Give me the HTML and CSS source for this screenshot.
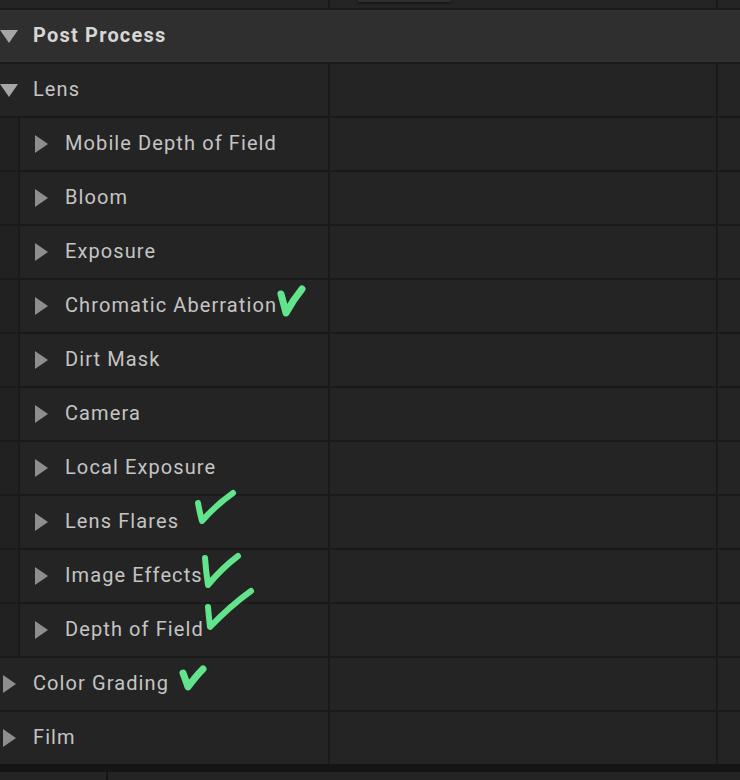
FILE: index.html
```html
<!DOCTYPE html>
<html>
<head>
<meta charset="utf-8">
<link rel="stylesheet" href="styles.css">
</head>
<body>
<div class="panel">
  <div class="rows">
    <div class="row top">
      <div class="cell"></div>
      <div class="cell value"><div class="tab"></div></div>
      <div class="cell"></div>
    </div>
    <div class="row header">
      <div class="cell name">
        <span class="icon"><svg width="18" height="13" viewBox="0 0 18 13"><polygon points="0,0 18,0 9,13" fill="#a6a6a6"/></svg></span>
        <span class="label bold">Post Process</span>
      </div>
    </div>
    <div class="row">
      <div class="cell name">
        <span class="icon"><svg width="18" height="13" viewBox="0 0 18 13"><polygon points="0,0 18,0 9,13" fill="#a6a6a6"/></svg></span>
        <span class="label">Lens</span>
      </div>
      <div class="cell"></div>
      <div class="cell"></div>
    </div>
    <div class="row nested">
      <div class="cell indent"></div>
      <div class="cell name"><span class="icon"><svg width="13" height="18" viewBox="0 0 13 18"><polygon points="0,0 13,9 0,18" fill="#8e8e8e"/></svg></span><span class="label">Mobile Depth of Field</span></div>
      <div class="cell"></div>
      <div class="cell"></div>
    </div>
    <div class="row nested">
      <div class="cell indent"></div>
      <div class="cell name"><span class="icon"><svg width="13" height="18" viewBox="0 0 13 18"><polygon points="0,0 13,9 0,18" fill="#8e8e8e"/></svg></span><span class="label">Bloom</span></div>
      <div class="cell"></div>
      <div class="cell"></div>
    </div>
    <div class="row nested">
      <div class="cell indent"></div>
      <div class="cell name"><span class="icon"><svg width="13" height="18" viewBox="0 0 13 18"><polygon points="0,0 13,9 0,18" fill="#8e8e8e"/></svg></span><span class="label">Exposure</span></div>
      <div class="cell"></div>
      <div class="cell"></div>
    </div>
    <div class="row nested">
      <div class="cell indent"></div>
      <div class="cell name"><span class="icon"><svg width="13" height="18" viewBox="0 0 13 18"><polygon points="0,0 13,9 0,18" fill="#8e8e8e"/></svg></span><span class="label">Chromatic Aberration</span></div>
      <div class="cell"></div>
      <div class="cell"></div>
    </div>
    <div class="row nested">
      <div class="cell indent"></div>
      <div class="cell name"><span class="icon"><svg width="13" height="18" viewBox="0 0 13 18"><polygon points="0,0 13,9 0,18" fill="#8e8e8e"/></svg></span><span class="label">Dirt Mask</span></div>
      <div class="cell"></div>
      <div class="cell"></div>
    </div>
    <div class="row nested">
      <div class="cell indent"></div>
      <div class="cell name"><span class="icon"><svg width="13" height="18" viewBox="0 0 13 18"><polygon points="0,0 13,9 0,18" fill="#8e8e8e"/></svg></span><span class="label">Camera</span></div>
      <div class="cell"></div>
      <div class="cell"></div>
    </div>
    <div class="row nested">
      <div class="cell indent"></div>
      <div class="cell name"><span class="icon"><svg width="13" height="18" viewBox="0 0 13 18"><polygon points="0,0 13,9 0,18" fill="#8e8e8e"/></svg></span><span class="label">Local Exposure</span></div>
      <div class="cell"></div>
      <div class="cell"></div>
    </div>
    <div class="row nested">
      <div class="cell indent"></div>
      <div class="cell name"><span class="icon"><svg width="13" height="18" viewBox="0 0 13 18"><polygon points="0,0 13,9 0,18" fill="#8e8e8e"/></svg></span><span class="label">Lens Flares</span></div>
      <div class="cell"></div>
      <div class="cell"></div>
    </div>
    <div class="row nested">
      <div class="cell indent"></div>
      <div class="cell name"><span class="icon"><svg width="13" height="18" viewBox="0 0 13 18"><polygon points="0,0 13,9 0,18" fill="#8e8e8e"/></svg></span><span class="label">Image Effects</span></div>
      <div class="cell"></div>
      <div class="cell"></div>
    </div>
    <div class="row nested">
      <div class="cell indent"></div>
      <div class="cell name"><span class="icon"><svg width="13" height="18" viewBox="0 0 13 18"><polygon points="0,0 13,9 0,18" fill="#8e8e8e"/></svg></span><span class="label">Depth of Field</span></div>
      <div class="cell"></div>
      <div class="cell"></div>
    </div>
    <div class="row">
      <div class="cell name"><span class="icon"><svg width="13" height="18" viewBox="0 0 13 18"><polygon points="0,0 13,9 0,18" fill="#8e8e8e"/></svg></span><span class="label">Color Grading</span></div>
      <div class="cell"></div>
      <div class="cell"></div>
    </div>
    <div class="row">
      <div class="cell name"><span class="icon"><svg width="13" height="18" viewBox="0 0 13 18"><polygon points="0,0 13,9 0,18" fill="#8e8e8e"/></svg></span><span class="label">Film</span></div>
      <div class="cell"></div>
      <div class="cell"></div>
    </div>
  </div>
  <div class="footer-bar"></div>
  <div class="footer">
    <div class="cell"></div>
    <div class="cell"></div>
  </div>
  <svg class="checks" width="740" height="780" viewBox="0 0 740 780">
    <g fill="none" stroke="#62e48c" stroke-linecap="round" stroke-linejoin="round">
      <path stroke-width="7" d="M281,294 Q284,305 286,313 Q293,300 302,289"/>
      <path stroke-width="6" d="M198,503 Q200,514 202,521 Q216,505 233,493"/>
      <path stroke-width="6" d="M205,558 Q206,572 208,585 Q222,568 238,556"/>
      <path stroke-width="6" d="M208,607 Q209,618 210,627 Q230,606 251,591"/>
      <path stroke-width="7" d="M183,673 Q186,681 188,687 Q196,676 203,669"/>
    </g>
  </svg>
</div>
</body>
</html>
```

FILE: styles.css
```css
html, body {
  margin: 0;
  padding: 0;
  background: #242424;
}

.panel {
  position: relative;
  width: 740px;
  height: 780px;
  overflow: hidden;
  font-family: Roboto, "Noto Sans", sans-serif;
}

.rows {
  display: flex;
  flex-direction: column;
  gap: 2px;
  background: #1a1a1a;
}

.row {
  display: grid;
  grid-template-columns: 328px 386px 1fr;
  column-gap: 2px;
  height: 52px;
  background: #1a1a1a;
}

.row.nested {
  grid-template-columns: 18px 308px 386px 1fr;
}

.row.top {
  height: 8px;
}

.row.header {
  grid-template-columns: 1fr;
}

.cell {
  background: #242424;
}

.row.header .cell {
  background: #2f2f2f;
}

.cell.indent {
  background: #212121;
}

.cell.value {
  display: flex;
}

.tab {
  margin-left: 28px;
  width: 93px;
  height: 2px;
  background: #2e2e2e;
  box-shadow: 0 1px 3px rgba(0, 0, 0, 0.8);
}

.name {
  display: flex;
  align-items: center;
  gap: 15px;
}

.label {
  padding-bottom: 2px;
}

.nested .name {
  padding-left: 12px;
}

.icon {
  width: 18px;
  display: flex;
  justify-content: center;
  align-items: center;
}

.icon svg {
  display: block;
}

.label {
  font-size: 20px;
  letter-spacing: 1.1px;
  color: #c4c4c4;
  white-space: nowrap;
}

.label.bold {
  font-weight: 700;
  letter-spacing: 1.2px;
  color: #d6d6d6;
}

.footer-bar {
  height: 8px;
  background: #151515;
}

.footer {
  display: grid;
  grid-template-columns: 106px 1fr;
  column-gap: 2px;
  height: 8px;
  background: #151515;
}

.checks {
  position: absolute;
  top: 0;
  left: 0;
  pointer-events: none;
}
```
